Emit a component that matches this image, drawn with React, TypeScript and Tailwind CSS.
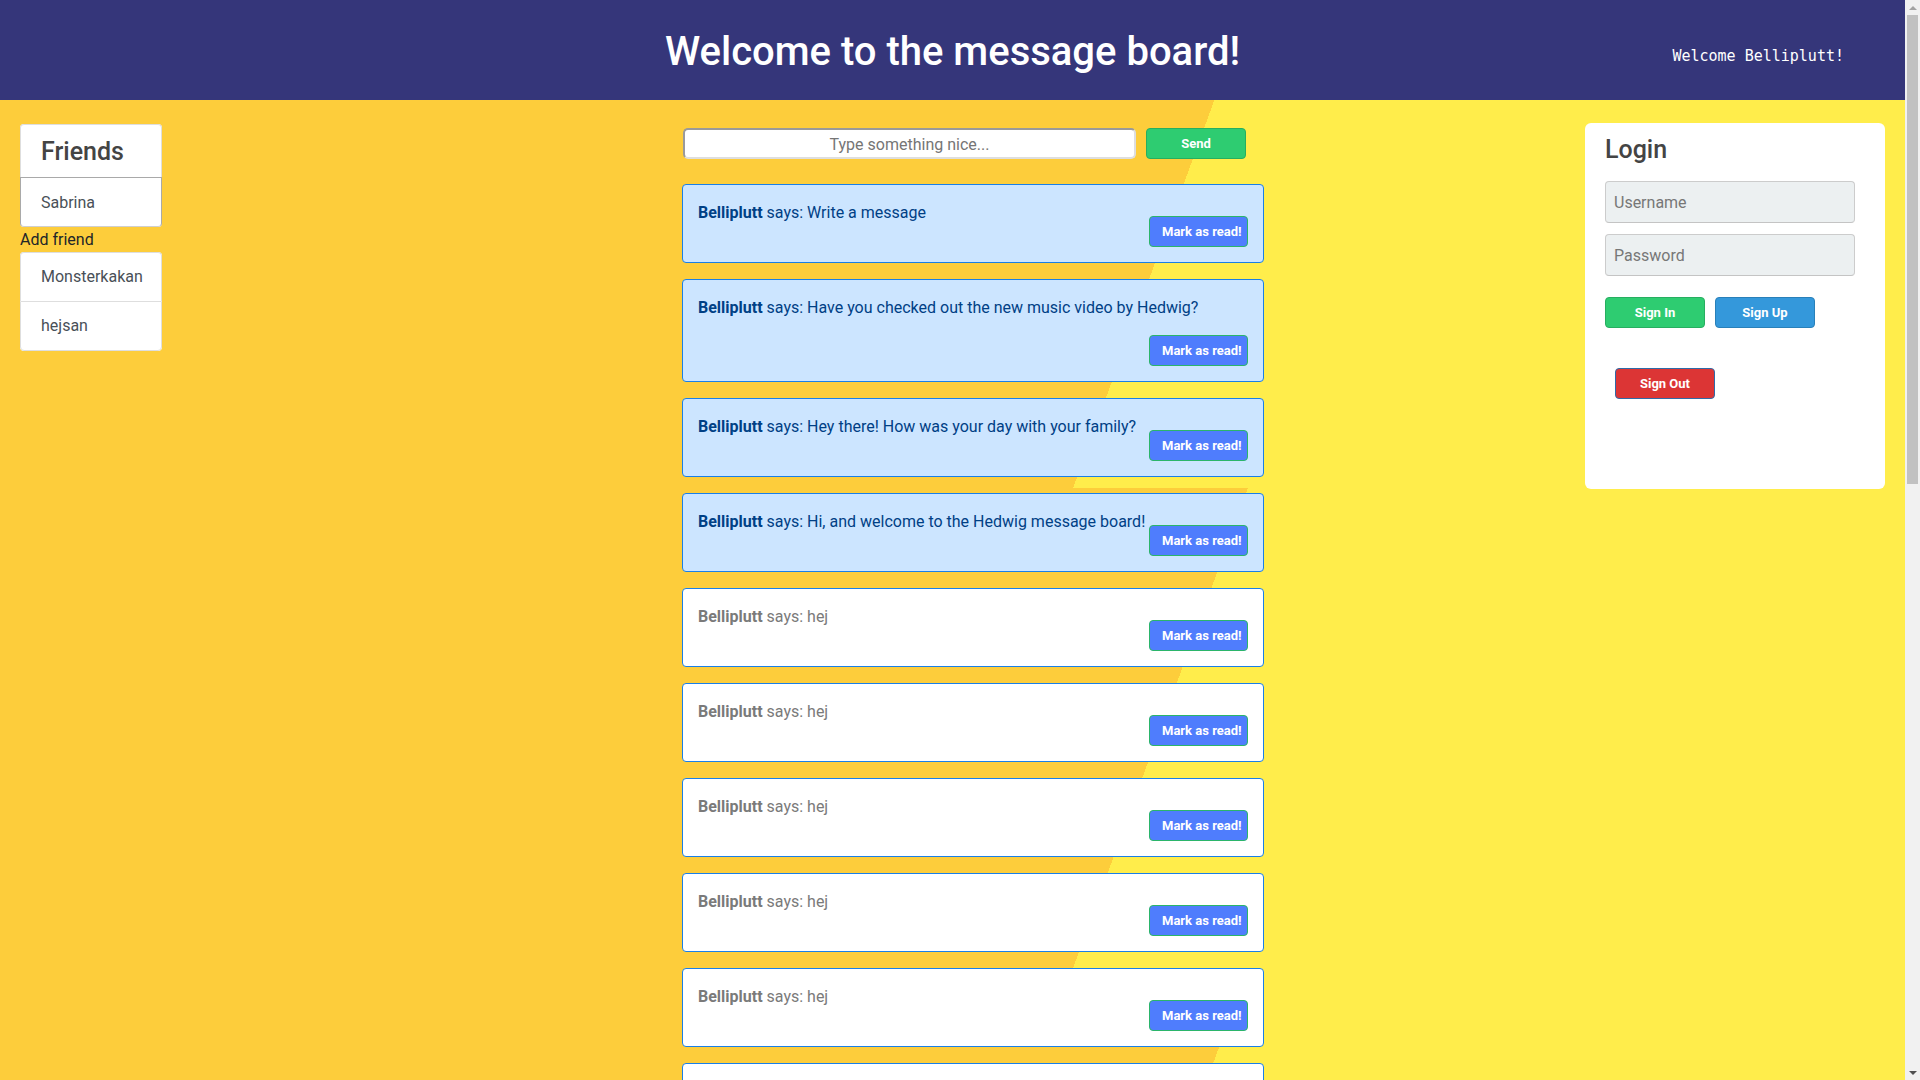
import { useState } from "react";

// type
type Message = {
  id: number;
  author: string;
  text: string;
  read: boolean;
};

const initialMessages: Message[] = [
  { id: 1, author: "Belliplutt", text: "Write a message", read: false },
  { id: 2, author: "Belliplutt", text: "Have you checked out the new music video by Hedwig?", read: false },
  { id: 3, author: "Belliplutt", text: "Hey there! How was your day with your family?", read: false },
  { id: 4, author: "Belliplutt", text: "Hi, and welcome to the Hedwig message board!", read: false },
  { id: 5, author: "Belliplutt", text: "hej", read: true },
  { id: 6, author: "Belliplutt", text: "hej", read: true },
  { id: 7, author: "Belliplutt", text: "hej", read: true },
  { id: 8, author: "Belliplutt", text: "hej", read: true },
  { id: 9, author: "Belliplutt", text: "hej", read: true },
  { id: 10, author: "Belliplutt", text: "hej", read: true },
  { id: 11, author: "Belliplutt", text: "hej", read: true },
];

function Friends() {
  return (
    <div className="w-[142px] mt-[24px] shrink-0">
      <div className="bg-white rounded">
        <div className="px-[20px] pt-[13px] pb-[11px] border border-b-0 border-[#dedede] rounded-t">
          <h3 className="text-[25px] leading-[28px] font-medium text-[#444]">Friends</h3>
        </div>
        <div className="px-[20px] pt-[13px] pb-[11px] border border-[#a9a9a9] border-b-[#cfcfcf] rounded-b text-base leading-6 text-[#495057]">
          Sabrina
        </div>
      </div>
      <div className="pt-px text-base leading-6 text-[#212529]">Add friend</div>
      <div className="bg-white rounded">
        <div className="px-[20px] py-[12px] border border-b-0 border-[#dedede] rounded-t text-base leading-6 text-[#495057]">
          Monsterkakan
        </div>
        <div className="px-[20px] py-[12px] border border-[#dedede] rounded-b text-base leading-6 text-[#495057]">
          hejsan
        </div>
      </div>
    </div>
  );
}

function MessageCard({ item, onRead }: { item: Message; onRead: (id: number) => void }) {
  return (
    <div
      className={
        item.read
          ? "flex flex-wrap pl-[15px] pr-[15px] pt-[16px] pb-[15px] border border-[#1a7fe6] rounded bg-white text-[#7a7a7a]"
          : "flex flex-wrap pl-[15px] pr-[15px] pt-[16px] pb-[15px] border border-[#1a7fe6] rounded bg-[#cce5ff] text-[#004085]"
      }
    >
      <span className="text-base leading-6">
        <b className="font-bold">{item.author}</b> says: {item.text}
      </span>
      <button
        onClick={() => onRead(item.id)}
        className="ml-auto mt-[15px] h-[31px] w-[99px] pl-[12px] text-left whitespace-nowrap bg-[#4f7dfd] border border-[#2bb56a] rounded text-white text-[13px] font-bold"
      >
        Mark as read!
      </button>
    </div>
  );
}

function Login() {
  return (
    <div className="ml-auto mt-[23px] w-[300px] h-[366px] shrink-0 bg-white rounded-[6px] px-[20px] pt-[12px]">
      <h2 className="text-[25px] leading-[30px] font-medium text-[#444]">Login</h2>
      <div className="mt-[16px] flex flex-col gap-[11px]">
        <input
          type="text"
          placeholder="Username"
          className="w-[250px] h-[42px] bg-[#ecf0f1] border border-[#cccccc] border-b-[#c4c4c4] rounded px-[8px] text-base outline-none placeholder:text-[#777]"
        />
        <input
          type="password"
          placeholder="Password"
          className="w-[250px] h-[42px] bg-[#ecf0f1] border border-[#cccccc] border-b-[#c4c4c4] rounded px-[8px] text-base outline-none placeholder:text-[#777]"
        />
      </div>
      <div className="mt-[21px] flex gap-[10px]">
        <button className="w-[100px] h-[31px] bg-[#2ecc71] border border-[#27ae60] rounded text-white text-[13px] font-bold">
          Sign In
        </button>
        <button className="w-[100px] h-[31px] bg-[#3498db] border border-[#2980b9] rounded text-white text-[13px] font-bold">
          Sign Up
        </button>
      </div>
      <button className="mt-[40px] ml-[10px] w-[100px] h-[31px] bg-[#dc3535] border border-[#2f6aa8] rounded text-white text-[13px] font-bold">
        Sign Out
      </button>
    </div>
  );
}

function App() {
  const [messages, setMessages] = useState<Message[]>(initialMessages);
  const [text, setText] = useState("");

  const handleRead = (id: number) => {
    setMessages((prev) => prev.map((item) => (item.id === id ? { ...item, read: true } : item)));
  };

  const handleSend = () => {
    if (!text.trim()) return;
    setMessages((prev) => [{ id: Date.now(), author: "Belliplutt", text, read: false }, ...prev]);
    setText("");
  };

  return (
    <div className="flex h-screen overflow-hidden font-['Roboto',sans-serif]">
      <div className="flex-1 min-w-0 h-full overflow-hidden bg-[linear-gradient(110deg,#fdcd3b_60%,#ffed4b_60%)] bg-[length:100%_480px] bg-[position:0_8px]">
        {/* Header */}
        <header className="h-[100px] bg-[#35367a] grid grid-cols-[1fr_auto_1fr] items-center">
          <div />
          <h1 className="pt-[4px] text-[40px] font-medium text-white">Welcome to the message board!</h1>
          <div className="justify-self-end pr-[61px] pt-[13px] font-['DejaVu_Sans_Mono',monospace] text-[15px] text-white">
            Welcome Belliplutt!
          </div>
        </header>

        <div className="flex items-start px-[20px]">
          <Friends />

          {/* Messages */}
          <div className="ml-[520px] mt-[28px] w-[582px] shrink-0">
            <div className="flex gap-[10px] pl-px">
              <input
                type="text"
                value={text}
                onChange={(event) => setText(event.target.value)}
                placeholder="Type something nice..."
                className="w-[453px] h-[31px] bg-white border-2 border-t-[#9a9a9a] border-l-[#9a9a9a] border-b-[#dedede] border-r-[#dedede] rounded-[5px] pt-px text-center text-base outline-none placeholder:text-[#757575]"
              />
              <button
                onClick={handleSend}
                className="w-[100px] h-[31px] bg-[#2ecc71] border border-[#27ae60] rounded text-white text-[13px] font-bold"
              >
                Send
              </button>
            </div>
            <div className="mt-[25px] flex flex-col gap-4">
              {messages.map((item) => (
                <MessageCard key={item.id} item={item} onRead={handleRead} />
              ))}
            </div>
          </div>

          <Login />
        </div>
      </div>

      {/* scrollbar */}
      <div className="w-[15px] h-full shrink-0 bg-[#f1f1f1] flex flex-col">
        <div className="h-[15px] flex items-center justify-center">
          <div className="w-0 h-0 border-x-[4px] border-x-transparent border-b-[4px] border-b-[#a3a3a3]" />
        </div>
        <div className="mx-[2px] h-[469px] bg-[#c1c1c1]" />
        <div className="flex-1" />
        <div className="h-[15px] flex items-center justify-center">
          <div className="w-0 h-0 border-x-[4px] border-x-transparent border-t-[4px] border-t-[#505050]" />
        </div>
      </div>
    </div>
  );
}

export default App;
